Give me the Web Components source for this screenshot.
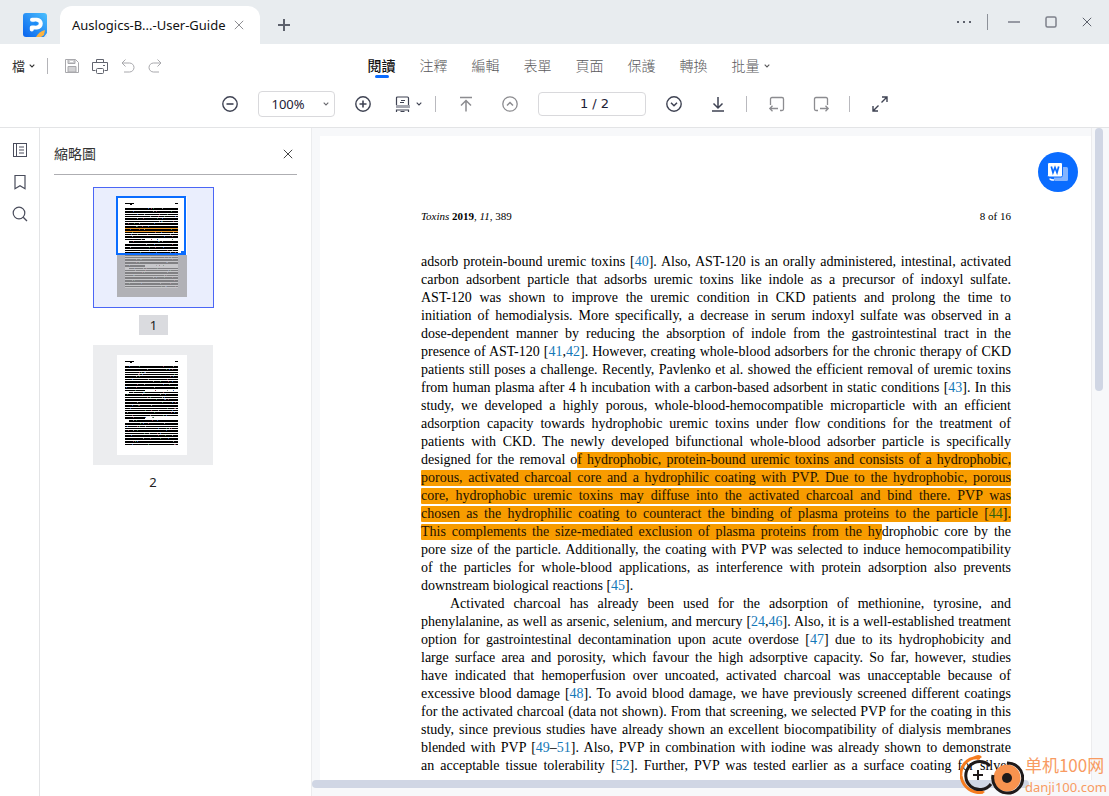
<!DOCTYPE html>
<html lang="zh-Hant">
<head>
<meta charset="utf-8">
<meta name="viewport" content="width=device-width, initial-scale=1">
<title>Auslogics-B...-User-Guide</title>
<style>
html, body { margin: 0; height: 100%; }
body { font: 13px/20px "Noto Sans", "Noto Sans CJK TC", sans-serif; color: #222; background: #fff; overflow: hidden; }
</style>
</head>
<body>
<pdf-app></pdf-app>
<script>
const define = (name, html, init) => {
  const t = document.createElement('template');
  t.innerHTML = `<style>
    *{box-sizing:border-box}
    button{font:inherit;color:inherit;background:none;border:0;padding:0;margin:0;display:inline-flex;align-items:center;justify-content:center}
  </style>` + html;
  customElements.define(name, class extends HTMLElement {
    constructor() {
      super();
      this.attachShadow({ mode: 'open' }).append(t.content.cloneNode(true));
    }
    connectedCallback() { if (init) init(this, this.shadowRoot); }
  });
};

/* Icons: [width, height, markup] */
const ICONS = {
  logo: [24, 24, `<defs><linearGradient id="g" x1="1" y1="0" x2="0" y2="1"><stop offset="0" stop-color="#4cc0fd"/><stop offset="1" stop-color="#0863ee"/></linearGradient></defs><rect width="24" height="24" rx="3" fill="url(#g)" stroke="none"/><path d="M9 6.800h5a3.800 3.800 0 0 1 0 7.600H8.800V16.500" stroke="#fff" stroke-width="4" stroke-linejoin="round" stroke-linecap="round"/><path d="M5 11h7" stroke="#1c8cf7" stroke-width="1.500"/><circle cx="12.500" cy="10.600" r="2" fill="#1c8cf7" stroke="none"/><path d="M13 24c2-3.500 5-6 9-7l-1 5-3 2z" fill="#ffb340" stroke="none"/><path d="M21 24l3-4v2a2 2 0 0 1-2 2z" fill="#e9edf0" stroke="none"/>`],
  x: [10, 10, `<path d="M.8.800l8.400 8.400M9.200.800L.8 9.200"/>`],
  plus: [12, 12, `<path d="M6 0v12M0 6h12" stroke-width="2"/>`],
  dots: [16, 4, `<path d="M1 2h2M7 2h2M13 2h2" stroke-width="2"/>`],
  min: [12, 2, `<path d="M0 1h12" stroke-width="2" stroke="#9699a3"/>`],
  max: [12, 12, `<rect x="1" y="1" width="10" height="10" rx="1.500" stroke-width="1.500" stroke="#7d808b"/>`],
  caret: [6, 4, `<path d="M.7.700L3 3 5.300.700" stroke-width="1.100"/>`],
  save: [16, 16, `<path d="M1.500 1.500h10l3 3v10h-13z"/><path d="M4 1.500h7v4H4zM4 14V8.500h8V14z" fill="#d2d2d4"/><path d="M6 3.500h3" stroke="#fff"/>`],
  print: [16, 16, `<path d="M4.500 4.500V1.500h7v3M3.500 12.500h-3v-8h15v8h-3"/><rect x="4.500" y="10.500" width="7" height="5" rx="1"/><path d="M11 7.500h2"/>`],
  undo: [14, 16, `<path d="M4.500 1.500L1 5l3.500 3.500M1 5h7.500a4.500 4.500 0 0 1 0 9H3"/>`],
  redo: [14, 16, `<path d="M9.500 1.500L13 5 9.500 8.500M13 5H5.500a4.500 4.500 0 0 0 0 9H11"/>`],
  zoomout: [16, 16, `<circle cx="8" cy="8" r="7.200" stroke-width="1.400"/><path d="M4.500 8h7" stroke-width="1.600"/>`],
  zoomin: [16, 16, `<circle cx="8" cy="8" r="7.200" stroke-width="1.400"/><path d="M4.500 8h7M8 4.500v7" stroke-width="1.600"/>`],
  layout: [16, 16, `<path d="M1.500 9V2q0-1 1-1h10q1 0 1 1v7M1.500 16v-2h12v2M6 4.500h4M5 6.500h4M5.500 15.500h4" stroke-width="1.200"/><path d="M1 10.500h14" stroke="#a5a7b0" stroke-width="3"/>`],
  top: [16, 16, `<path d="M2 1.500h12M8 15.500V5M3 9.500l5-5 5 5" stroke-width="1.500"/>`],
  up: [16, 16, `<circle cx="8" cy="8" r="7.200" stroke-width="1.300"/><path d="M5 9.500l3-3 3 3" stroke-width="1.500"/>`],
  down: [16, 16, `<circle cx="8" cy="8" r="7.200" stroke-width="1.400"/><path d="M5 6.700l3 3 3-3" stroke-width="1.500"/>`],
  bottom: [16, 16, `<path d="M2 15h12M8 1v11M3.500 7.500L8 12l4.500-4.500" stroke-width="1.500"/>`],
  back: [16, 16, `<path d="M1.500 9V3q0-1.500 1.500-1.500h10q1.500 0 1.500 1.500v10q0 1.500-1.500 1.500h-2M9 12.500H1M3.500 9.700L.8 12.500l2.700 2.800" stroke-width="1.300"/>`],
  next: [16, 16, `<path d="M14.500 9V3q0-1.500-1.500-1.500H3Q1.500 1.500 1.500 3v10q0 1.500 1.500 1.500h2M7 12.500h8M12.500 9.700l2.700 2.800-2.700 2.800" stroke-width="1.300"/>`],
  expand: [16, 16, `<path d="M10 1h5v5M15 1L9.500 6.500M6 15H1v-5M1 15l5.500-5.500" stroke-width="1.400"/>`],
  thumbs: [16, 16, `<rect x="1.500" y="1.500" width="13" height="13"/><path d="M4.500 2v12M7 5h5M7 8h5M7 11h5"/>`],
  bookmark: [16, 16, `<path d="M3 1.500h10v13.300l-5-3-5 3z" stroke-width="1.200"/>`],
  search: [16, 16, `<circle cx="7" cy="7" r="5.800" stroke-width="1.200"/><path d="M11.200 11.200L15 15" stroke-width="1.300"/>`],
  word: [40, 40, `<circle cx="20" cy="20" r="20" fill="#0a6cff" stroke="none"/><rect x="16" y="15" width="14" height="14" rx="1.500" fill="#84b4ff" stroke="none"/><path d="M12 26.500q0 1.500 4 1.500" stroke="#fff" stroke-width="1.600"/><rect x="9.500" y="10.500" width="15" height="14.500" rx="1.500" fill="#fff" stroke="#0a6cff"/><path d="M13.300 14.500l1.700 6 2-5 2 5 1.700-6" stroke="#0a6cff" stroke-width="1.700"/>`],
};
customElements.define('ui-icon', class extends HTMLElement {
  constructor() { super(); this.attachShadow({ mode: 'open' }); }
  connectedCallback() {
    const [w, h, m] = ICONS[this.getAttribute('name')];
    this.shadowRoot.innerHTML = `<style>:host{display:inline-flex;flex:none}svg{display:block;overflow:visible}</style>
      <svg width="${w}" height="${h}" viewBox="0 0 ${w} ${h}" fill="none" stroke="currentColor" aria-hidden="true">${m}</svg>`;
  }
});

define('title-bar', `<style>
  :host{display:flex;height:44px;padding-left:23px;background:#e8ecef;align-items:flex-end;color:#5d616c}
  .logo{height:38px;margin-right:13px;display:flex;align-items:center}
  .tab{height:38px;width:200px;padding:0 16px 0 12px;background:#fff;border-radius:12px 12px 0 0;display:flex;align-items:center;justify-content:space-between;color:#111}
  .tab button{color:#8e8e92}
  .new{height:38px;margin-left:18px}
  .win{margin-left:auto;height:44px;padding-right:17px;display:flex;align-items:center;gap:25px}
  .more{display:flex;align-items:center;gap:15px;margin-right:-5px}
  .more i{width:1px;height:16px;background:#8d9199}
</style>
<span class="logo"><ui-icon name="logo"></ui-icon></span>
<div class="tab"><span>Auslogics-B...-User-Guide</span><button aria-label="Close tab"><ui-icon name="x"></ui-icon></button></div>
<button class="new" aria-label="New tab"><ui-icon name="plus"></ui-icon></button>
<div class="win"><span class="more"><button aria-label="More"><ui-icon name="dots"></ui-icon></button><i></i></span>
<button aria-label="Minimize"><ui-icon name="min"></ui-icon></button><button aria-label="Maximize"><ui-icon name="max"></ui-icon></button><button aria-label="Close"><ui-icon name="x"></ui-icon></button></div>`);

define('menu-bar', `<style>
  :host{display:grid;grid-template-columns:1fr auto 1fr;height:44px;padding-left:12px;align-items:center;font-size:14px;color:#5a5a5c}
  .file{display:flex;align-items:center;gap:12px;color:#a8a8ac}
  .file .m{gap:4px;color:#333;font-size:13px;line-height:20px}
  .file i{width:1px;height:16px;background:#b4b4b8;margin-right:4px}
  .file .p{color:#62656f}
  .file .p, .file .u{margin-right:1px}
  nav{display:flex;gap:24px;padding-left:16px;font-weight:300}
  nav button{height:24px;position:relative;gap:4px}
  nav .on{color:#111;font-weight:500}
  nav .on::after{content:"";position:absolute;left:7px;width:14px;height:3px;border-radius:2px;bottom:0;background:#0a6cff}
</style>
<div class="file"><button class="m">檔<ui-icon name="caret"></ui-icon></button><i></i>
<button aria-label="Save"><ui-icon name="save"></ui-icon></button><button class="p" aria-label="Print"><ui-icon name="print"></ui-icon></button><button class="u" aria-label="Undo"><ui-icon name="undo"></ui-icon></button><button aria-label="Redo"><ui-icon name="redo"></ui-icon></button></div>
<nav><button class="on">閱讀</button><button>注釋</button><button>編輯</button><button>表單</button><button>頁面</button><button>保護</button><button>轉換</button><button>批量<ui-icon name="caret"></ui-icon></button></nav>`);

define('tool-bar', `<style>
  :host{display:flex;height:40px;padding-bottom:8px;box-sizing:border-box;align-items:center;justify-content:center;gap:20px;color:#3f4353;border-bottom:1px solid #e3e4e6}
  i{width:1px;height:16px;background:#b9b9be;margin-right:2px}
  .wide{margin-left:8px}
  .soft{color:#8c8c90}
  .lay{gap:5px;margin:0 -7px 0 4px}
  .zoom{display:grid;align-items:center;color:#6a6a70}
  .zoom>*{grid-area:1/1}
  .zoom ui-icon{justify-self:end;margin-right:6px;pointer-events:none}
  select,input{appearance:none;border:1px solid #d9d9dc;border-radius:4px;background:#fff;color:#1d2136;margin:0}
  select{width:77px;height:26px;padding:0 13px;font:inherit}
  input{width:108px;height:24px;font:13px/20px "DejaVu Sans",sans-serif;text-align:center;padding:0 0 0 6px}
</style>
<button aria-label="Zoom out"><ui-icon name="zoomout"></ui-icon></button>
<label class="zoom"><select aria-label="Zoom"><option>100%</option></select><ui-icon name="caret"></ui-icon></label>
<button aria-label="Zoom in"><ui-icon name="zoomin"></ui-icon></button>
<button class="lay" aria-label="Page layout"><ui-icon name="layout"></ui-icon><ui-icon name="caret"></ui-icon></button><i></i>
<button class="soft" aria-label="First page"><ui-icon name="top"></ui-icon></button>
<button class="soft wide" aria-label="Previous page"><ui-icon name="up"></ui-icon></button>
<input aria-label="Page" value="1 / 2">
<button aria-label="Next page"><ui-icon name="down"></ui-icon></button>
<button class="wide" aria-label="Last page"><ui-icon name="bottom"></ui-icon></button><i></i>
<button class="soft" aria-label="Back"><ui-icon name="back"></ui-icon></button>
<button class="soft wide" aria-label="Forward"><ui-icon name="next"></ui-icon></button><i></i>
<button aria-label="Full screen"><ui-icon name="expand"></ui-icon></button>`);

define('side-rail', `<style>
  :host{display:flex;flex-direction:column;align-items:center;gap:16px;padding-top:14px;border-right:1px solid #e3e4e6;color:#4a4d5c;background:#fff}
</style>
<button aria-label="Thumbnails"><ui-icon name="thumbs"></ui-icon></button><button aria-label="Bookmarks"><ui-icon name="bookmark"></ui-icon></button><button aria-label="Search"><ui-icon name="search"></ui-icon></button>`);

/* A miniature page: rows of text drawn as dark stripes of varied thickness. */
define('page-thumb', `<style>
  :host{display:grid;width:120px;row-gap:7px}
  .frame{width:120px;height:120px;background:#ecedef;padding:10px 24px;align-items:flex-start;justify-content:flex-start}
  :host([current]) .frame{width:121px;height:121px;background:#eaeefd;border:1px solid #4b66f5;padding:9px 23px}
  svg{display:block;overflow:visible;flex:none}
  .n{width:29px;height:20px;justify-self:center;text-align:center;color:#222;font-size:13px;line-height:20px}
  :host([current]) .n{background:#dadbdf}
</style><button class="frame"></button><span class="n"><slot></slot></span>`, (el, root) => {
  const cur = el.hasAttribute('current');
  const box = root.querySelector('.frame');
  box.setAttribute('aria-label', 'Page thumbnail');
  const pattern = [2, 2, 1, 1, 2, 1, 2];
  const rows = [];
  let seed = cur ? 7 : 3;
  const rnd = () => (seed = (seed * 73 + 41) % 997) / 997;
  for (let y = 11, i = 0; y < 90; i++) {
    const h = pattern[i % 7];
    const hot = cur && y > 27 && y < 35;
    const short = cur ? (i === 12 || i === 22) : (i === 9 || i === 20);
    const x = (cur ? i === 13 || i === 23 : i === 10 || i === 21) ? 12 : 8;
    rows.push(`<rect x="${x}" y="${y}" width="${short ? 20 : 61 - x}" height="${h}" fill="#000"/>`);
    if (hot) rows.push(`<rect x="8" y="${y + h}" width="53" height="1" fill="#f5a02c"/>`);
    for (let k = 0; k < 4; k++) rows.push(`<rect x="${9 + Math.floor(rnd() * 50)}" y="${y}" width="1" height="1" fill="${['#3a7a4a', '#2a5aa8', '#8a3a50', '#888'][k]}"/>`);
    y += h + 1;
  }
  box.innerHTML = `<svg width="70" height="100" viewBox="0 0 70 100" shape-rendering="crispEdges" aria-hidden="true"><rect width="70" height="100" fill="#fff"/>
    <path d="M8 6.500h9M13 7.500h2M58 6.500h3" stroke="#000"/>${rows.join('')}
    ${cur ? '<rect y="58" width="70" height="42" fill="#b1b1b6" opacity=".72"/><rect y="58" width="8" height="42" fill="#b1b1b6"/><rect x="61" y="58" width="9" height="42" fill="#b1b1b6"/><rect y="91" width="70" height="9" fill="#b1b1b6"/><rect x="0" y="0" width="68" height="57" fill="none" stroke="#0a6cff" stroke-width="2"/><rect x="64" y="54" width="4" height="4" fill="#0a6cff"/>' : ''}</svg>`;
});

define('thumb-panel', `<style>
  :host{display:block;padding:16px 14px 0;border-right:1px solid #ebecee;background:#fff;box-sizing:border-box}
  header{display:flex;justify-content:space-between;align-items:center;height:31px;padding-bottom:10px;border-bottom:1px solid #aeaeb2;color:#333;font-size:14px}
  header button{margin-right:4px;color:#444}
  h2{font:inherit;margin:0}
  .list{display:grid;justify-items:start;row-gap:10px;padding:12px 0 0 39px}
</style>
<header><h2>縮略圖</h2><button aria-label="Close panel"><ui-icon name="x"></ui-icon></button></header>
<div class="list"><page-thumb current>1</page-thumb><page-thumb>2</page-thumb></div>`);

/* Lines of the page: "[n]" numbers become links, {…} is highlighted, ">" indents, "." at the start keeps the line ragged. */
const LINES = [
  'adsorb protein-bound uremic toxins [40]. Also, AST-120 is an orally administered, intestinal, activated',
  'carbon adsorbent particle that adsorbs uremic toxins like indole as a precursor of indoxyl sulfate.',
  'AST-120 was shown to improve the uremic condition in CKD patients and prolong the time to',
  'initiation of hemodialysis. More specifically, a decrease in serum indoxyl sulfate was observed in a',
  'dose-dependent manner by reducing the absorption of indole from the gastrointestinal tract in the',
  'presence of AST-120 [41,42]. However, creating whole-blood adsorbers for the chronic therapy of CKD',
  'patients still poses a challenge. Recently, Pavlenko et al. showed the efficient removal of uremic toxins',
  'from human plasma after 4 h incubation with a carbon-based adsorbent in static conditions [43]. In this',
  'study, we developed a highly porous, whole-blood-hemocompatible microparticle with an efficient',
  'adsorption capacity towards hydrophobic uremic toxins under flow conditions for the treatment of',
  'patients with CKD. The newly developed bifunctional whole-blood adsorber particle is specifically',
  'designed for the removal o{f hydrophobic, protein-bound uremic toxins and consists of a hydrophobic,}',
  '{porous, activated charcoal core and a hydrophilic coating with PVP. Due to the hydrophobic, porous}',
  '{core, hydrophobic uremic toxins may diffuse into the activated charcoal and bind there. PVP was}',
  '{chosen as the hydrophilic coating to counteract the binding of plasma proteins to the particle [44].}',
  '{This complements the size-mediated exclusion of plasma proteins from the hy}drophobic core by the',
  'pore size of the particle. Additionally, the coating with PVP was selected to induce hemocompatibility',
  'of the particles for whole-blood applications, as interference with protein adsorption also prevents',
  '.downstream biological reactions [45].',
  '>Activated charcoal has already been used for the adsorption of methionine, tyrosine, and',
  'phenylalanine, as well as arsenic, selenium, and mercury [24,46]. Also, it is a well-established treatment',
  'option for gastrointestinal decontamination upon acute overdose [47] due to its hydrophobicity and',
  'large surface area and porosity, which favour the high adsorptive capacity. So far, however, studies',
  'have indicated that hemoperfusion over uncoated, activated charcoal was unacceptable because of',
  'excessive blood damage [48]. To avoid blood damage, we have previously screened different coatings',
  'for the activated charcoal (data not shown). From that screening, we selected PVP for the coating in this',
  'study, since previous studies have already shown an excellent biocompatibility of dialysis membranes',
  'blended with PVP [49–51]. Also, PVP in combination with iodine was already shown to demonstrate',
  'an acceptable tissue tolerability [52]. Further, PVP was tested earlier as a surface coating for silver',
];
define('doc-page', `<style>
  :host{display:block;box-sizing:border-box;background:#fff;padding:72px 80px 0 101px;color:#000;font:14px/18px "Liberation Serif",serif;overflow:hidden}
  header{display:flex;justify-content:space-between;font-size:11px;line-height:16px;margin-bottom:29px}
  p{margin:0}
  .l{display:block;white-space:nowrap;text-align:justify;text-align-last:justify}
  .r{text-align-last:left}
  .in{padding-left:29px}
  a{color:#1478b8;text-decoration:none}
  mark{background:#f89c00;color:#1c1200;border-radius:1px;padding-bottom:1px}
  mark a{color:#2f5f10}
</style>
<header><span><em>Toxins</em> <b>2019</b>, <em>11</em>, 389</span><span>8 of 16</span></header><div></div>`, (el, root) => {
  const fmt = s => s.replace(/\[([^\]]+)\]/g, (m, n) => '[' + n.replace(/\d+/g, d => `<a href="#ref-${d}">${d}</a>`) + ']')
    .replace('{', '<mark>').replace('}', '</mark>');
  let html = '<p>';
  for (const s of LINES) {
    if (s[0] === '>') html += `</p><p><span class="l in">${fmt(s.slice(1))}</span>`;
    else if (s[0] === '.') html += `<span class="l r">${fmt(s.slice(1))}</span>`;
    else html += `<span class="l">${fmt(s)}</span>`;
  }
  root.querySelector('div').innerHTML = html + '</p>';
});

define('doc-view', `<style>
  :host{display:grid;grid-template:minmax(0,1fr) 16px/minmax(0,1fr) 18px;background:#f7f8fa;position:relative;min-width:0;min-height:0}
  doc-page{margin:8px 0 0 8px;min-height:0}
  .v{border-left:1px solid #ececee;padding-left:3px}
  .v i{display:block;width:8px;height:263px;border-radius:4px;background:#d0d6e4}
  .h i{display:block;width:92%;height:8px;border-radius:4px;background:#d0d6e4}
  .word{position:absolute;right:31px;top:24px;border-radius:50%}
</style>
<doc-page></doc-page><div class="v"><i></i></div><div class="h"><i></i></div>
<button class="word" aria-label="Convert to Word"><ui-icon name="word"></ui-icon></button>`);

define('site-mark', `<style>
  :host{display:flex;align-items:flex-end;gap:1px;color:#f89b62;font-family:"Noto Sans CJK SC",sans-serif}
  svg{display:block}
  span{display:block;white-space:nowrap}
  .a{font-size:17px;line-height:26px}
  .b{font-size:13px;line-height:18px;font-family:"Noto Sans",sans-serif}
</style>
<svg width="64" height="42" viewBox="0 0 64 42" fill="none" aria-hidden="true">
<path d="M20 4C6 2 0 14 1 22c2 12 12 18 22 16" stroke="#f57c1f" stroke-width="3"/><path d="M13 3q6-4 9 0l-4 3zM15 38q5 4 10 0l-5-3z" fill="#f57c1f"/>
<path d="M30 12A14 14 0 1 0 31 30" stroke="#1f1a1a" stroke-width="3"/><path d="M18 16v10M13 21h10" stroke="#1f1a1a" stroke-width="2"/>
<circle cx="47" cy="24" r="13.500" fill="#f8934f"/><path d="M47 9a15 15 0 1 1-14 12" stroke="#1f1a1a" stroke-width="3"/><circle cx="47" cy="24" r="5" fill="#1f1a1a"/></svg>
<div><span class="a">单机100网</span><span class="b">danji100.com</span></div>`);

define('pdf-app', `<style>
  :host{display:grid;grid-template:auto auto auto minmax(0,1fr)/minmax(0,1fr);height:100vh;position:relative}
  main{display:grid;grid-template-columns:40px 272px minmax(0,1fr);min-height:0}
  site-mark{position:absolute;right:2px;bottom:0}
</style>
<title-bar></title-bar><menu-bar></menu-bar><tool-bar></tool-bar>
<main><side-rail></side-rail><thumb-panel></thumb-panel><doc-view></doc-view></main>
<site-mark></site-mark>`);
</script>
</body>
</html>
